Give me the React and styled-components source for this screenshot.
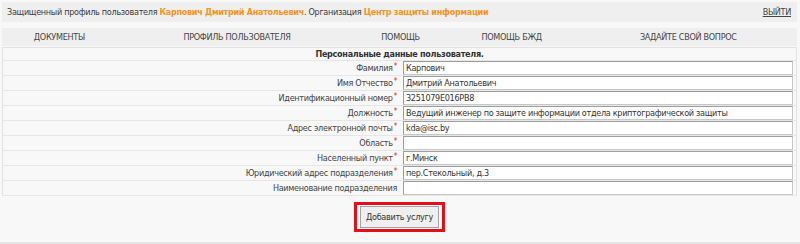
import React from "react";
import styled, { createGlobalStyle } from "styled-components";

const fontStack = `"DejaVu Sans Condensed", "DejaVu Sans", sans-serif`;

const GlobalStyle = createGlobalStyle`
  html, body {
    margin: 0;
    padding: 0;
    background: #f8f8f8;
  }
  body {
    font-family: ${fontStack};
    font-size: 9px;
    letter-spacing: -0.3px;
    color: #3a3a3a;
  }
`;

const Page = styled.div`
  width: 800px;
  height: 244px;
  box-sizing: border-box;
  padding: 2px 3px 0 2px;
  border-bottom: 2px solid #e6e6e6;
`;

const TopBar = styled.div`
  height: 20px;
  background: #efefef;
  display: flex;
  align-items: center;
  justify-content: space-between;
  padding: 0 6px 0 5px;
`;

const Accent = styled.b`
  color: #f7941e;
`;

const Logout = styled.a`
  color: #444;
  text-decoration: underline;
`;

const Nav = styled.div`
  display: table;
  width: 100%;
  height: 18px;
  margin-top: 6px;
  background: #efefef;
`;

const NavItem = styled.div`
  display: table-cell;
  vertical-align: middle;
  text-align: center;
  color: #444;
  white-space: nowrap;
`;

const FormTable = styled.table`
  width: 100%;
  border-collapse: collapse;
  border: 1px solid #e2e2e2;
  margin-top: 1px;
`;

const Title = styled.th`
  height: 12px;
  padding: 0;
  font-weight: bold;
  text-align: center;
  color: #333;
  line-height: 12px;
  border-bottom: 1px solid #e6e6e6;
`;

const Row = styled.tr`
  border-bottom: 1px solid #e6e6e6;
`;

const Label = styled.td`
  width: 394px;
  padding: 0 4px 0 0;
  text-align: right;
  color: #444;
  white-space: nowrap;
  line-height: 13px;
`;

const Star = styled.span`
  color: #e0262c;
  font-size: 8px;
  vertical-align: top;
  margin-left: 1px;
  line-height: 9px;
`;

const Field = styled.td`
  padding: 0 3px 0 2px;
`;

const Input = styled.input`
  display: block;
  width: 100%;
  height: 14px;
  box-sizing: border-box;
  margin: 0;
  padding: 0 2px;
  border: 1px solid #9e9e9e;
  border-right-color: #c8c8c8;
  border-bottom-color: #c8c8c8;
  background: #fff;
  font-family: ${fontStack};
  font-size: 9px;
  letter-spacing: -0.3px;
  color: #333;
  outline: none;
`;

const Actions = styled.div`
  display: flex;
  justify-content: center;
  padding-top: 6px;
`;

const Highlight = styled.div`
  border: 3px solid #e3101c;
  padding: 1px 3px;
`;

const Button = styled.button`
  height: 22px;
  padding: 0 5px;
  border: 1px solid #a4a4a4;
  background: #efefef;
  font-family: ${fontStack};
  font-size: 9px;
  letter-spacing: -0.3px;
  color: #333;
`;

const navItems = [
  "ДОКУМЕНТЫ",
  "ПРОФИЛЬ ПОЛЬЗОВАТЕЛЯ",
  "ПОМОЩЬ",
  "ПОМОЩЬ БЖД",
  "ЗАДАЙТЕ СВОЙ ВОПРОС",
];

const fields = [
  { label: "Фамилия", value: "Карпович", required: true },
  { label: "Имя Отчество", value: "Дмитрий Анатольевич", required: true },
  { label: "Идентификационный номер", value: "3251079E016PB8", required: true },
  {
    label: "Должность",
    value: "Ведущий инженер по защите информации отдела криптографической защиты",
    required: true,
  },
  { label: "Адрес электронной почты", value: "kda@isc.by", required: true },
  { label: "Область", value: "", required: true },
  { label: "Населенный пункт", value: "г.Минск", required: true },
  { label: "Юридический адрес подразделения", value: "пер.Стекольный, д.3", required: true },
  { label: "Наименование подразделения", value: "", required: false },
];

export default function App() {
  return (
    <>
      <GlobalStyle />
      <Page>
        <TopBar>
          <span>
            Защищенный профиль пользователя <Accent>Карпович Дмитрий Анатольевич</Accent>.
            Организация <Accent>Центр защиты информации</Accent>
          </span>
          <Logout href="#">ВЫЙТИ</Logout>
        </TopBar>
        <Nav>
          {navItems.map((item) => (
            <NavItem key={item}>{item}</NavItem>
          ))}
        </Nav>
        <FormTable>
          <tbody>
            <tr>
              <Title colSpan={2}>Персональные данные пользователя.</Title>
            </tr>
            {fields.map((f) => (
              <Row key={f.label}>
                <Label>
                  {f.label}
                  {f.required && <Star>*</Star>}
                </Label>
                <Field>
                  <Input defaultValue={f.value} readOnly />
                </Field>
              </Row>
            ))}
          </tbody>
        </FormTable>
        <Actions>
          <Highlight>
            <Button type="button">Добавить услугу</Button>
          </Highlight>
        </Actions>
      </Page>
    </>
  );
}
